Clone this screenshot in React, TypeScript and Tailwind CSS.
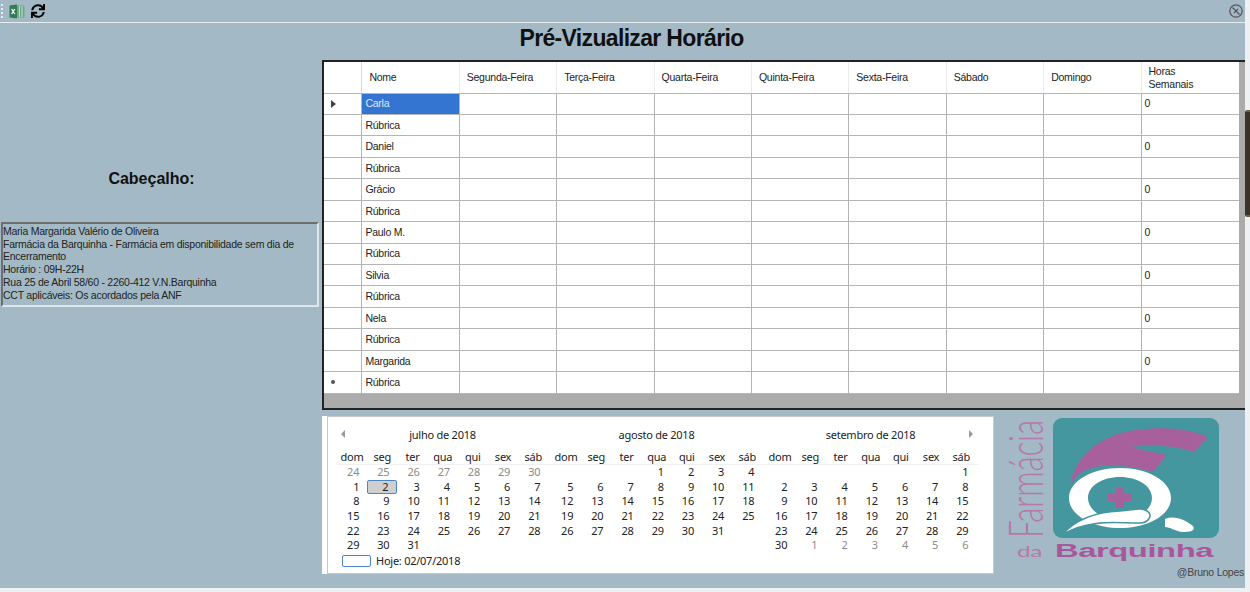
import { FaSync } from "react-icons/fa";

const dias = ["dom", "seg", "ter", "qua", "qui", "sex", "sáb"];
const colunas = ["Nome", "Segunda-Feira", "Terça-Feira", "Quarta-Feira", "Quinta-Feira", "Sexta-Feira", "Sábado", "Domingo"];
const nomes = ["Carla", "Daniel", "Grácio", "Paulo M.", "Silvia", "Nela", "Margarida"];

type Dia = { n: number; outro?: boolean; sel?: boolean };

const seq = (de: number, ate: number, outro = false): Dia[] =>
  Array.from({ length: ate - de + 1 }, (_, i) => ({ n: de + i, outro, sel: false }));

const julho = seq(1, 31).map((d) => (d.n === 2 ? { ...d, sel: true } : d));

const meses: { titulo: string; vazios: number; dias: Dia[] }[] = [
  { titulo: "julho de 2018", vazios: 0, dias: [...seq(24, 30, true), ...julho] },
  { titulo: "agosto de 2018", vazios: 3, dias: seq(1, 31) },
  { titulo: "setembro de 2018", vazios: 6, dias: [...seq(1, 30), ...seq(1, 6, true)] },
];

const linhas = nomes.flatMap((nome) => [
  { nome, horas: "0" },
  { nome: "Rúbrica", horas: "" },
]);

function ExcelIcon() {
  return (
    <svg width="16" height="15" viewBox="0 0 16 15">
      <rect x="7" y="1.5" width="8.5" height="12" fill="#6fa98a" />
      <path d="M10.5 2v11M13 2v11" stroke="#d7e6dc" strokeWidth="0.8" />
      <path d="M0.5 1.5 8 0.5v14L0.5 13.5z" fill="#2f7d55" />
      <path d="M2.6 5 5.8 10M5.8 5 2.6 10" stroke="#fff" strokeWidth="1.3" />
    </svg>
  );
}

function Grelha() {
  return (
    <div className="h-[350px] border-b-2 border-l-2 border-t-2 border-[#222] bg-[#ababab]">
      <div className="w-[915px] bg-white">
        <div className="grid h-[31.5px] grid-cols-[38.4px_97.4px_repeat(8,97.4px)] border-b border-[#b5b5b5] text-[#222]">
          <div className="border-r border-[#d9d9d9]" />
          {colunas.map((c) => (
            <div key={c} className="flex items-center border-r border-[#ececec] pl-[7px] pt-[1px]">
              {c}
            </div>
          ))}
          <div className="flex items-center pl-[7px] pt-[1px] leading-[13px]">
            Horas
            <br />
            Semanais
          </div>
        </div>
        {linhas.map((l, i) => (
          <div key={i} className="grid h-[21.45px] grid-cols-[38.4px_97.4px_repeat(8,97.4px)] border-b border-[#b5b5b5]">
            <div className="flex items-center justify-center border-r border-[#b5b5b5] border-b-[#e4e4e4] pr-[19px] text-[#444]">
              {i === 0 && <span className="h-0 w-0 border-y-[4px] border-l-[5px] border-y-transparent border-l-[#444]" />}
              {i === 13 && <span className="size-[4px] rounded-full bg-[#555]" />}
            </div>
            <div className={`flex items-center border-r border-[#b5b5b5] pl-[3px] pt-[1px] ${i === 0 ? "bg-[#3375d1] text-[#dfe9f7]" : ""}`}>
              {l.nome}
            </div>
            {Array.from({ length: 7 }, (_, j) => (
              <div key={j} className="border-r border-[#b5b5b5]" />
            ))}
            <div className="flex items-center pl-[3px] pt-[1px]">{l.horas}</div>
          </div>
        ))}
      </div>
    </div>
  );
}

function Mes({ titulo, vazios, dias: lista }: { titulo: string; vazios: number; dias: Dia[] }) {
  return (
    <div className="w-[214px]">
      <div className="flex h-[18px] items-center justify-center pr-[3px] text-[#222]">{titulo}</div>
      <div className="mt-[6px] grid grid-cols-[repeat(7,30.2px)] border-b border-[#f0f0f0] text-center leading-[14px]">
        {dias.map((d) => (
          <span key={d}>{d}</span>
        ))}
      </div>
      <div className="grid auto-rows-[14.65px] grid-cols-[repeat(7,30.2px)] text-right leading-[14px]">
        {Array.from({ length: vazios }, (_, i) => (
          <span key={i} />
        ))}
        {lista.map((d, i) => (
          <span
            key={i}
            className={`pr-[8px] ${d.outro ? "text-[#8a8a8a]" : ""} ${d.sel ? "rounded-[2px] border border-[#4a86c8] bg-[#cfcfcf] pr-[7px] leading-[12px]" : ""}`}
          >
            {d.n}
          </span>
        ))}
      </div>
    </div>
  );
}

function Calendario() {
  return (
    <div className="w-[672px] bg-white pl-[5px] text-[11px] text-[#222] [font-family:'Noto_Sans',sans-serif]">
      <div className="relative h-[158px] border border-[#c8c8c8] pl-[9px] pt-[9px]">
        <span className="absolute left-[13px] top-[13px] h-0 w-0 border-y-[4px] border-r-[4px] border-y-transparent border-r-[#9a9a9a]" />
        <span className="absolute right-[20px] top-[13px] h-0 w-0 border-y-[4px] border-l-[4px] border-y-transparent border-l-[#9a9a9a]" />
        <div className="flex">
          {meses.map((m) => (
            <Mes key={m.titulo} {...m} />
          ))}
        </div>
        <div className="absolute bottom-[4px] left-[14px] flex items-center gap-[5px]">
          <span className="h-[12px] w-[29px] rounded-[2px] border border-[#4a86c8]" />
          <span>Hoje: 02/07/2018</span>
        </div>
      </div>
    </div>
  );
}

function Logo() {
  return (
    <svg width="225" height="150" viewBox="0 0 225 150" className="overflow-visible">
      <rect x="53" y="3" width="166" height="120" rx="9" fill="#45979f" />
      <path d="M70 70C76 40 100 20 136 15 165 11 190 14 208 22L194 37C175 30 150 29 130 32L167 40 153 57C130 50 105 48 88 54 80 57 74 63 70 70Z" fill="#a8609c" />
      <path fillRule="evenodd" d="M120 53c28 0 51 13 51 30s-23 30-51 30-51-13-51-30 23-30 51-30zm0 9c-18 0-32 9-32 21s14 22 32 22 32-10 32-22-14-21-32-21z" fill="#fff" />
      <path d="M116 72h8v7h8v7h-8v7h-8v-7h-8v-7h8z" fill="#a8609c" />
      <path d="M62 120C75 105 95 97 120 96 135 95 140 92 147 96 154 100 148 108 140 108 125 109 90 102 62 120Z" fill="#fff" stroke="#45979f" strokeWidth="1.5" />
      <path d="M165 104C175 100 185 105 193 111 196 116 190 117 182 117 175 116 170 112 165 112Z" fill="#fff" />
      <text transform="translate(43 123) rotate(-90)" textLength="118" lengthAdjust="spacingAndGlyphs" fontSize="48" fontWeight="300" fontFamily="Lato, sans-serif" fill="#b877ac">
        Farmácia
      </text>
      <text x="17" y="142" textLength="25" lengthAdjust="spacingAndGlyphs" fontSize="15" fontFamily="Lato, sans-serif" fill="#b877ac">
        da
      </text>
      <text x="55" y="142" textLength="158" lengthAdjust="spacingAndGlyphs" fontSize="18" fontWeight="700" fontFamily="'Liberation Sans', sans-serif" fill="#a9569c">
        Barquinha
      </text>
    </svg>
  );
}

export default function App() {
  return (
    <div className="flex h-[592px] w-[1250px] flex-col overflow-hidden bg-[#eef1f3] text-[10.5px] tracking-[-0.25px] text-[#222] [font-family:'Liberation_Sans',sans-serif]">
      <div className="flex h-[588px]">
        <div className="w-[1245px] bg-[#a3bac6]">
          <div className="flex h-[23px] items-center gap-[6px] border-b border-[#e6edf0] pl-[1px] pr-[2px]">
            <span className="h-[14px] border-l-2 border-dotted border-[#e6edf0]" />
            <ExcelIcon />
            <FaSync size={14} className="text-black" />
            <svg className="ml-auto" width="14" height="14" viewBox="0 0 14 14" fill="none" stroke="#555">
              <circle cx="7" cy="7" r="6.2" strokeWidth="1.2" />
              <path d="M3.5 3.5l7 7M5 9l4-4" strokeWidth="1.2" />
            </svg>
          </div>
          <h1 className="h-[37px] pl-[18px] text-center text-[23px] font-bold leading-[31px] tracking-[-0.66px] text-[#111]">
            Pré-Vizualizar Horário
          </h1>
          <div className="flex">
            <div className="w-[322px] pl-[1px] pr-[3px] pt-[109px]">
              <h2 className="pr-[17px] text-center text-[16px] font-bold leading-[20px] tracking-normal text-[#111]">Cabeçalho:</h2>
              <div className="mt-[33px] h-[85px] border-2 border-[#dfe7eb] border-l-[#6e6e6e] border-t-[#6e6e6e] pt-[1px] leading-[12.7px]">
                Maria Margarida Valério de Oliveira
                <br />
                Farmácia da Barquinha - Farmácia em disponibilidade sem dia de
                <br />
                Encerramento
                <br />
                Horário : 09H-22H
                <br />
                Rua 25 de Abril 58/60 - 2260-412 V.N.Barquinha
                <br />
                CCT aplicáveis: Os acordados pela ANF
              </div>
            </div>
            <div className="w-[923px]">
              <Grelha />
              <div className="mt-[6px] flex">
                <Calendario />
                <div className="-mt-[1px] ml-[6px]">
                  <Logo />
                </div>
              </div>
              <div className="-mt-[8px] pr-[1px] text-right leading-[12px] text-[#444]">@Bruno Lopes</div>
            </div>
          </div>
        </div>
        <div className="w-[5px] pt-[110px]">
          <div className="h-[107px] rounded-l-[2px] border-y-2 border-[#6d6444] bg-[#3a3228]" />
        </div>
      </div>
    </div>
  );
}
